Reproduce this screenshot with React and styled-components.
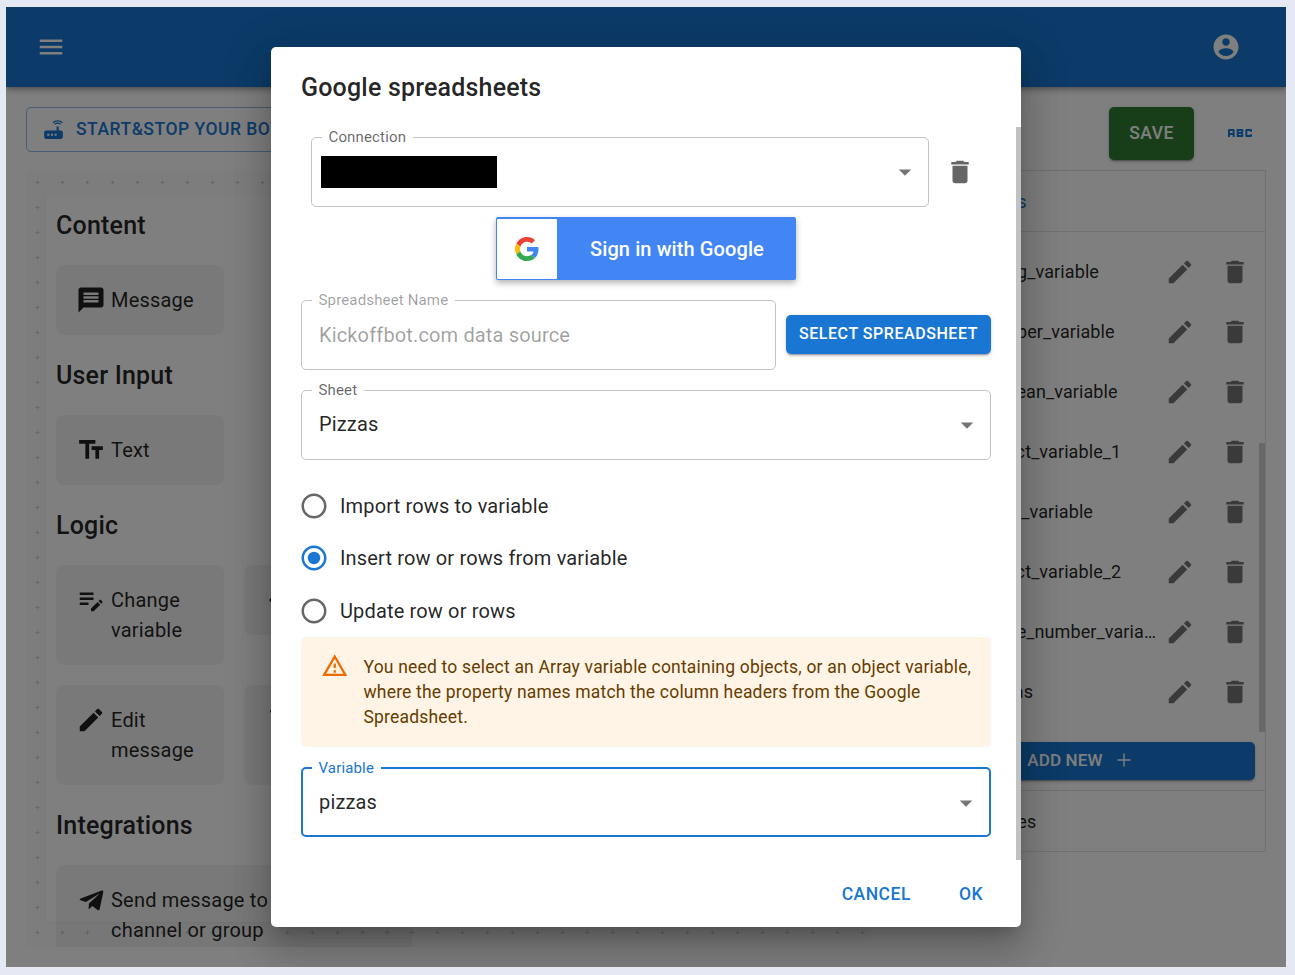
import React from "react";
import styled, { createGlobalStyle } from "styled-components";
import { FaTelegramPlane } from "react-icons/fa";

const Global = createGlobalStyle`
  html, body { margin: 0; padding: 0; background: #e6e8f3; }
  * { box-sizing: border-box; }
  body { font-family: Roboto, "Liberation Sans", sans-serif; }
`;

const P = {
  menu: "M3 18h18v-2H3v2zm0-5h18v-2H3v2zm0-7v2h18V6H3z",
  account: "M12 2C6.48 2 2 6.48 2 12s4.48 10 10 10 10-4.48 10-10S17.52 2 12 2zm0 3c1.66 0 3 1.34 3 3s-1.34 3-3 3-3-1.34-3-3 1.34-3 3-3zm0 14.2c-2.5 0-4.71-1.28-6-3.22.03-1.99 4-3.08 6-3.08 1.99 0 5.97 1.09 6 3.08-1.29 1.94-3.5 3.22-6 3.22z",
  router: "M20.2 5.9l.8-.8C19.6 3.7 17.8 3 16 3s-3.6.7-5 2.1l.8.8C13 4.8 14.5 4.2 16 4.2s3 .6 4.2 1.7zm-.9.8c-.9-.9-2.1-1.4-3.3-1.4s-2.4.5-3.3 1.4l.8.8c.7-.7 1.6-1 2.5-1 .9 0 1.8.3 2.5 1l.8-.8zM19 13h-2V9h-2v4H5c-1.1 0-2 .9-2 2v4c0 1.1.9 2 2 2h14c1.1 0 2-.9 2-2v-4c0-1.1-.9-2-2-2zM8 18H6v-2h2v2zm3.5 0h-2v-2h2v2zm3.5 0h-2v-2h2v2z",
  abc: "M21 11h-1.5v-.5h-2v3h2V13H21v1c0 .55-.45 1-1 1h-3c-.55 0-1-.45-1-1v-4c0-.55.45-1 1-1h3c.55 0 1 .45 1 1v1zM8 10v5H6.5v-1.5h-2V15H3v-5c0-.55.45-1 1-1h3c.55 0 1 .45 1 1zm-1.5.5h-2V12h2v-1.5zm7 1.5c.55 0 1 .45 1 1v1c0 .55-.45 1-1 1h-4V9h4c.55 0 1 .45 1 1v1c0 .55-.45 1-1 1zM11 10.5v.75h2v-.75h-2zm2 2.25h-2v.75h2v-.75z",
  message: "M20 2H4c-1.1 0-1.99.9-1.99 2L2 22l4-4h14c1.1 0 2-.9 2-2V4c0-1.1-.9-2-2-2zm-2 12H6v-2h12v2zm0-3H6V9h12v2zm0-3H6V6h12v2z",
  text: "M2.5 4v3h5v12h3V7h5V4h-13zm19 5h-9v3h3v7h3v-7h3V9z",
  editNote: "M3 10h11v2H3v-2zm0-2h11V6H3v2zm0 8h7v-2H3v2zm15.01-3.13.71-.71c.39-.39 1.02-.39 1.41 0l.71.71c.39.39.39 1.02 0 1.41l-.71.71-2.12-2.12zm-.71.71-5.3 5.3V21h2.12l5.3-5.3-2.12-2.12z",
  edit: "M3 17.25V21h3.75L17.81 9.94l-3.75-3.75L3 17.25zM20.71 7.04c.39-.39.39-1.02 0-1.41l-2.34-2.34c-.39-.39-1.02-.39-1.41 0l-1.83 1.83 3.75 3.75 1.83-1.83z",
  trash: "M6 19c0 1.1.9 2 2 2h8c1.1 0 2-.9 2-2V7H6v12zM19 4h-3.5l-1-1h-5l-1 1H5v2h14V4z",
  add: "M19 12.75h-6.25V19h-1.5v-6.25H5v-1.5h6.25V5h1.5v6.25H19v1.5z",
  caret: "M7 10l5 5 5-5z",
  warning: "M12 5.99L19.53 19H4.47L12 5.99M12 2L1 21h22L12 2zm1 14h-2v2h2v-2zm0-6h-2v4h2v-4z",
  radio: "M12 2C6.48 2 2 6.48 2 12s4.48 10 10 10 10-4.48 10-10S17.52 2 12 2zm0 18c-4.42 0-8-3.58-8-8s3.58-8 8-8 8 3.58 8 8-3.58 8-8 8z",
  arrow: "M20 11H7.83l5.59-5.59L12 4l-8 8 8 8 1.41-1.41L7.83 13H20v-2z",
};

const IconSvg = styled.svg`
  width: ${(p) => p.$size || 30}px;
  height: ${(p) => p.$size || 30}px;
  flex: none;
  display: block;
  fill: ${(p) => p.$color || "currentColor"};
`;
const Icon = ({ d, size, color, children }) => (
  <IconSvg viewBox="0 0 24 24" $size={size} $color={color}>
    <path d={d} />
    {children}
  </IconSvg>
);

const Frame = styled.div`
  position: relative;
  width: 1280px;
  height: 960px;
  margin: 7px 9px 8px 6px;
  background: #fff;
  overflow: hidden;
  display: flex;
  flex-direction: column;
`;
const AppBar = styled.header`
  height: 80px;
  flex: none;
  background: #1976d2;
  color: #fff;
  display: flex;
  align-items: center;
  justify-content: space-between;
  padding: 0 45px 0 30px;
  box-shadow: 0 2px 4px -1px rgba(0,0,0,.2), 0 4px 5px rgba(0,0,0,.14), 0 1px 10px rgba(0,0,0,.12);
`;
const Toolbar = styled.div`
  height: 63px;
  flex: none;
  margin-top: 20px;
  padding: 0 30px 0 20px;
  display: flex;
  align-items: flex-start;
`;
const StartButton = styled.div`
  height: 45px;
  border: 1px solid rgba(25,118,210,.5);
  border-radius: 5px;
  padding: 0 20px 1px 14px;
  display: flex;
  align-items: center;
  gap: 10px;
  color: #1976d2;
  font-size: 17.5px;
  font-weight: 500;
  letter-spacing: .5px;
`;
const Spacer = styled.div`flex: 1;`;
const SaveButton = styled.div`
  width: 85px;
  height: 53px;
  background: #2e7d32;
  color: #fff;
  border-radius: 5px;
  display: flex;
  align-items: center;
  justify-content: center;
  font-size: 17.5px;
  font-weight: 500;
  letter-spacing: .5px;
  padding-bottom: 2px;
  box-shadow: 0 3px 1px -2px rgba(0,0,0,.2), 0 2px 2px rgba(0,0,0,.14), 0 1px 5px rgba(0,0,0,.12);
`;
const AbcWrap = styled.div`
  margin: 10px 0 0 30px;
  color: #1976d2;
`;
const Main = styled.div`
  flex: 1;
  display: flex;
  align-items: flex-start;
  padding: 0 20px 0 21px;
  gap: 20px;
`;
const Canvas = styled.div`
  flex: 1;
  height: 777px;
  padding: 25px 0 0 19px;
  overflow: hidden;
  background-color: rgba(0,0,0,.015);
  background-image: url("data:image/svg+xml,%3Csvg xmlns='http://www.w3.org/2000/svg' width='25' height='25'%3E%3Cpath d='M12.5 10.5v4M10.5 12.5h4' stroke='%23cfcfcf' stroke-width='1'/%3E%3C/svg%3E");
  background-position: -2px 0;
`;
const Palette = styled.div`
  width: 375px;
  height: 727px;
  padding: 0 10px;
  background: #fff;
  box-shadow: 0 1px 3px rgba(0,0,0,.05);
`;
const Heading = styled.h3`
  margin: 10px 0;
  height: 60px;
  display: flex;
  align-items: center;
  font-size: 25px;
  font-weight: 500;
  letter-spacing: .2px;
  color: rgba(0,0,0,.87);
  &:first-child { margin-top: 0; }
`;
const ItemGrid = styled.div`
  display: grid;
  grid-template-columns: 168px 168px;
  gap: 20px;
  align-items: start;
`;
const Item = styled.div`
  grid-column: ${(p) => (p.$wide ? "1 / 3" : "auto")};
  background: rgba(0,0,0,.05);
  border-radius: 8px;
  padding: 20px;
  display: flex;
  gap: 5px;
  font-size: 20px;
  line-height: 30px;
  letter-spacing: .2px;
  color: rgba(0,0,0,.87);
  min-height: ${(p) => (p.$tall ? "100px" : "70px")};
`;
const ItemLabel = styled.span`
  max-width: 170px;
`;
const PlaneBox = styled.span`
  width: 30px;
  height: 30px;
  flex: none;
  display: flex;
  align-items: center;
  justify-content: center;
  font-size: 27px;
`;
const VarPanel = styled.section`
  position: relative;
  width: 375px;
  height: 682px;
  border: 1px solid rgba(0,0,0,.12);
  display: flex;
  flex-direction: column;
`;
const PanelHead = styled.div`
  height: 61px;
  flex: none;
  display: flex;
  align-items: center;
  padding-left: 60px;
  font-size: 18px;
  color: ${(p) => p.$color || "rgba(0,0,0,.87)"};
  border-${(p) => p.$side}: 1px solid rgba(0,0,0,.12);
`;
const VarList = styled.div`
  flex: 1;
  padding-top: 10px;
  overflow: hidden;
`;
const VarRow = styled.div`
  height: 60px;
  display: flex;
  align-items: center;
  padding-left: 89px;
`;
const VarName = styled.span`
  width: 176px;
  padding-bottom: 2px;
  font-size: 18px;
  letter-spacing: .1px;
  color: rgba(0,0,0,.87);
  white-space: nowrap;
  overflow: hidden;
  text-overflow: ellipsis;
`;
const VarActions = styled.div`
  display: flex;
  gap: 25px;
  margin-left: 8px;
  color: rgba(0,0,0,.54);
`;
const PanelThumb = styled.div`
  position: absolute;
  right: 0;
  top: 272px;
  width: 6px;
  height: 289px;
  background: rgba(0,0,0,.18);
`;
const AddButton = styled.div`
  height: 38px;
  flex: none;
  margin: 0 10px 10px;
  padding: 0 0 3px 5px;
  background: #1976d2;
  color: #fff;
  border-radius: 5px;
  display: flex;
  align-items: center;
  justify-content: center;
  gap: 10px;
  font-size: 17px;
  font-weight: 500;
  letter-spacing: .15px;
  box-shadow: 0 3px 1px -2px rgba(0,0,0,.2), 0 2px 2px rgba(0,0,0,.14), 0 1px 5px rgba(0,0,0,.12);
`;
const Backdrop = styled.div`
  position: absolute;
  inset: 0;
  background: rgba(0,0,0,.5);
`;
const Dialog = styled.div`
  position: absolute;
  left: 265px;
  top: 40px;
  width: 750px;
  height: 880px;
  background: #fff;
  border-radius: 5px;
  display: flex;
  flex-direction: column;
  box-shadow: 0 11px 15px -7px rgba(0,0,0,.2), 0 24px 38px 3px rgba(0,0,0,.14), 0 9px 46px 8px rgba(0,0,0,.12);
`;
const DialogTitle = styled.h2`
  height: 80px;
  flex: none;
  margin: 0;
  padding: 0 30px;
  display: flex;
  align-items: center;
  font-size: 25px;
  font-weight: 500;
  letter-spacing: .19px;
  color: rgba(0,0,0,.87);
`;
const DialogContent = styled.div`
  flex: 1;
  padding: 0 30px;
  overflow: hidden;
`;
const DialogThumb = styled.div`
  position: absolute;
  right: 0;
  top: 80px;
  width: 5px;
  height: 733px;
  background: #c1c1c1;
`;
const DialogActions = styled.div`
  height: 67px;
  flex: none;
  display: flex;
  justify-content: flex-end;
  align-items: center;
  gap: 48px;
  padding: 0 38px 0 0;
  color: #1976d2;
  font-size: 17.5px;
  font-weight: 500;
  letter-spacing: .5px;
`;
const Row = styled.div`
  display: flex;
  align-items: flex-start;
  gap: ${(p) => p.$gap || 0}px;
  margin-left: ${(p) => p.$indent || 0}px;
  margin-top: ${(p) => p.$top || 0}px;
`;
const Field = styled.fieldset`
  margin: ${(p) => p.$top || 0}px 0 0;
  padding: 0 8px 0 ${(p) => (p.$focus ? 16 : 17)}px;
  min-width: 0;
  width: ${(p) => (p.$width ? `${p.$width}px` : "100%")};
  height: ${(p) => (p.$focus ? 79 : 80)}px;
  flex: none;
  border: ${(p) => (p.$focus ? "2px solid #1976d2" : "1px solid #c4c4c4")};
  border-radius: 5px;
`;
const FieldLabel = styled.legend`
  margin-left: -7px;
  padding: 0 6.5px;
  height: 20px;
  font-size: 15px;
  line-height: 20px;
  letter-spacing: .15px;
  color: ${(p) => (p.$focus ? "#1976d2" : p.$muted ? "rgba(0,0,0,.38)" : "rgba(0,0,0,.6)")};
`;
const FieldBody = styled.div`
  height: 68px;
  margin-top: -9px;
  display: flex;
  align-items: center;
  justify-content: space-between;
  font-size: 20px;
  letter-spacing: .15px;
  color: ${(p) => (p.$muted ? "rgba(0,0,0,.38)" : "rgba(0,0,0,.87)")};
`;
const SelectValue = styled.span`
  margin-bottom: 2px;
`;
const Redacted = styled.div`
  width: 176px;
  height: 32px;
  margin-left: -8px;
  background: #000;
`;
const TrashSlot = styled.div`
  margin-top: 30px;
`;
const GoogleButton = styled.div`
  width: 300px;
  height: 63px;
  margin: 10px auto 0;
  padding: 1px;
  background: #4285f4;
  border-radius: 2px;
  display: flex;
  align-items: center;
  color: #fff;
  font-size: 20px;
  font-weight: 500;
  letter-spacing: .1px;
  box-shadow: 0 3px 6px rgba(0,0,0,.3);
`;
const GoogleMark = styled.div`
  width: 60px;
  height: 60px;
  margin-right: 33px;
  background: #fff;
  border-radius: 1px;
  display: flex;
  align-items: center;
  justify-content: center;
`;
const SelectButton = styled.div`
  width: 205px;
  height: 39px;
  margin-top: 25px;
  background: #1976d2;
  color: #fff;
  border-radius: 5px;
  display: flex;
  align-items: center;
  justify-content: center;
  font-size: 16px;
  font-weight: 500;
  letter-spacing: .55px;
  padding-bottom: 2px;
  box-shadow: 0 3px 1px -2px rgba(0,0,0,.2), 0 2px 2px rgba(0,0,0,.14), 0 1px 5px rgba(0,0,0,.12);
`;
const RadioGroup = styled.div`
  margin-top: 20px;
`;
const RadioRow = styled.div`
  height: 52.33px;
  margin-left: -2px;
  display: flex;
  align-items: center;
  gap: 11px;
  font-size: 20px;
  letter-spacing: .15px;
  color: rgba(0,0,0,.87);
`;
const Alert = styled.div`
  background: #fff4e5;
  color: #663c00;
  border-radius: 5px;
  padding: 18.5px 10px 16.5px 20px;
  display: flex;
  gap: 15px;
  font-size: 17.5px;
  letter-spacing: .19px;
  line-height: 25px;
`;
const AlertIconWrap = styled.div`
  margin-top: -3px;
`;

const vars = ["string_variable", "number_variable", "boolean_variable", "object_variable_1", "array_variable", "object_variable_2", "some_number_variable", "pizzas"];

const GoogleG = () => (
  <svg width="24" height="24" viewBox="0 0 48 48">
    <path fill="#EA4335" d="M24 9.5c3.54 0 6.71 1.22 9.21 3.6l6.85-6.85C35.9 2.38 30.47 0 24 0 14.62 0 6.51 5.38 2.56 13.22l7.98 6.19C12.43 13.72 17.74 9.5 24 9.5z" />
    <path fill="#4285F4" d="M46.98 24.55c0-1.57-.15-3.09-.38-4.55H24v9.02h12.94c-.58 2.96-2.26 5.48-4.78 7.18l7.73 6c4.51-4.18 7.09-10.36 7.09-17.65z" />
    <path fill="#FBBC05" d="M10.53 28.59c-.48-1.45-.76-2.99-.76-4.59s.27-3.14.76-4.59l-7.98-6.19C.92 16.46 0 20.12 0 24c0 3.88.92 7.54 2.56 10.78l7.97-6.19z" />
    <path fill="#34A853" d="M24 48c6.48 0 11.93-2.13 15.89-5.81l-7.73-6c-2.15 1.45-4.92 2.3-8.16 2.3-6.26 0-11.57-4.22-13.47-9.91l-7.98 6.19C6.51 42.62 14.62 48 24 48z" />
  </svg>
);

const Radio = ({ label, on }) => (
  <RadioRow>
    <Icon d={P.radio} color={on ? "#1976d2" : "rgba(0,0,0,.6)"}>
      {on && <circle cx="12" cy="12" r="5" />}
    </Icon>
    {label}
  </RadioRow>
);

const Caret = () => <Icon d={P.caret} color="rgba(0,0,0,.54)" />;

export default function App() {
  return (
    <>
      <Global />
      <Frame>
        <AppBar>
          <Icon d={P.menu} />
          <Icon d={P.account} />
        </AppBar>
        <Toolbar>
          <StartButton>
            <Icon d={P.router} size={25} />
            START&amp;STOP YOUR BOT
          </StartButton>
          <Spacer />
          <SaveButton>SAVE</SaveButton>
          <AbcWrap><Icon d={P.abc} size={32} /></AbcWrap>
        </Toolbar>
        <Main>
          <Canvas>
            <Palette>
              <Heading>Content</Heading>
              <ItemGrid>
                <Item><Icon d={P.message} />Message</Item>
              </ItemGrid>
              <Heading>User Input</Heading>
              <ItemGrid>
                <Item><Icon d={P.text} />Text</Item>
              </ItemGrid>
              <Heading>Logic</Heading>
              <ItemGrid>
                <Item $tall><Icon d={P.editNote} />Change variable</Item>
                <Item><Icon d={P.arrow} />Jump</Item>
                <Item $tall><Icon d={P.edit} />Edit message</Item>
                <Item $tall><Icon d={P.trash} />Delete message</Item>
              </ItemGrid>
              <Heading>Integrations</Heading>
              <ItemGrid>
                <Item $wide>
                  <PlaneBox><FaTelegramPlane /></PlaneBox>
                  <ItemLabel>Send message to channel or group</ItemLabel>
                </Item>
              </ItemGrid>
            </Palette>
          </Canvas>
          <VarPanel>
            <PanelHead $side="bottom" $color="#1976d2">Variables</PanelHead>
            <VarList>
              {vars.map((v) => (
                <VarRow key={v}>
                  <VarName>{v}</VarName>
                  <VarActions>
                    <Icon d={P.edit} />
                    <Icon d={P.trash} />
                  </VarActions>
                </VarRow>
              ))}
            </VarList>
            <AddButton>ADD NEW <Icon d={P.add} size={22} /></AddButton>
            <PanelHead $side="top">Templates</PanelHead>
            <PanelThumb />
          </VarPanel>
        </Main>
        <Backdrop />
        <Dialog>
          <DialogTitle>Google spreadsheets</DialogTitle>
          <DialogContent>
            <Row $indent={10} $gap={16}>
              <Field $width={618}>
                <FieldLabel>Connection</FieldLabel>
                <FieldBody><Redacted /><Caret /></FieldBody>
              </Field>
              <TrashSlot><Icon d={P.trash} color="rgba(0,0,0,.6)" /></TrashSlot>
            </Row>
            <GoogleButton>
              <GoogleMark><GoogleG /></GoogleMark>
              Sign in with Google
            </GoogleButton>
            <Row $top={10} $gap={10}>
              <Field $width={475}>
                <FieldLabel $muted>Spreadsheet Name</FieldLabel>
                <FieldBody $muted>Kickoffbot.com data source</FieldBody>
              </Field>
              <SelectButton>SELECT SPREADSHEET</SelectButton>
            </Row>
            <Field $top={10}>
              <FieldLabel>Sheet</FieldLabel>
              <FieldBody><SelectValue>Pizzas</SelectValue><Caret /></FieldBody>
            </Field>
            <RadioGroup>
              <Radio label="Import rows to variable" />
              <Radio label="Insert row or rows from variable" on />
              <Radio label="Update row or rows" />
            </RadioGroup>
            <Alert>
              <AlertIconWrap><Icon d={P.warning} size={27.5} color="#ed6c02" /></AlertIconWrap>
              <div>You need to select an Array variable containing objects, or an object variable, where the property names match the column headers from the Google Spreadsheet.</div>
            </Alert>
            <Field $top={11} $focus>
              <FieldLabel $focus>Variable</FieldLabel>
              <FieldBody><SelectValue>pizzas</SelectValue><Caret /></FieldBody>
            </Field>
          </DialogContent>
          <DialogActions>
            <span>CANCEL</span>
            <span>OK</span>
          </DialogActions>
          <DialogThumb />
        </Dialog>
      </Frame>
    </>
  );
}
